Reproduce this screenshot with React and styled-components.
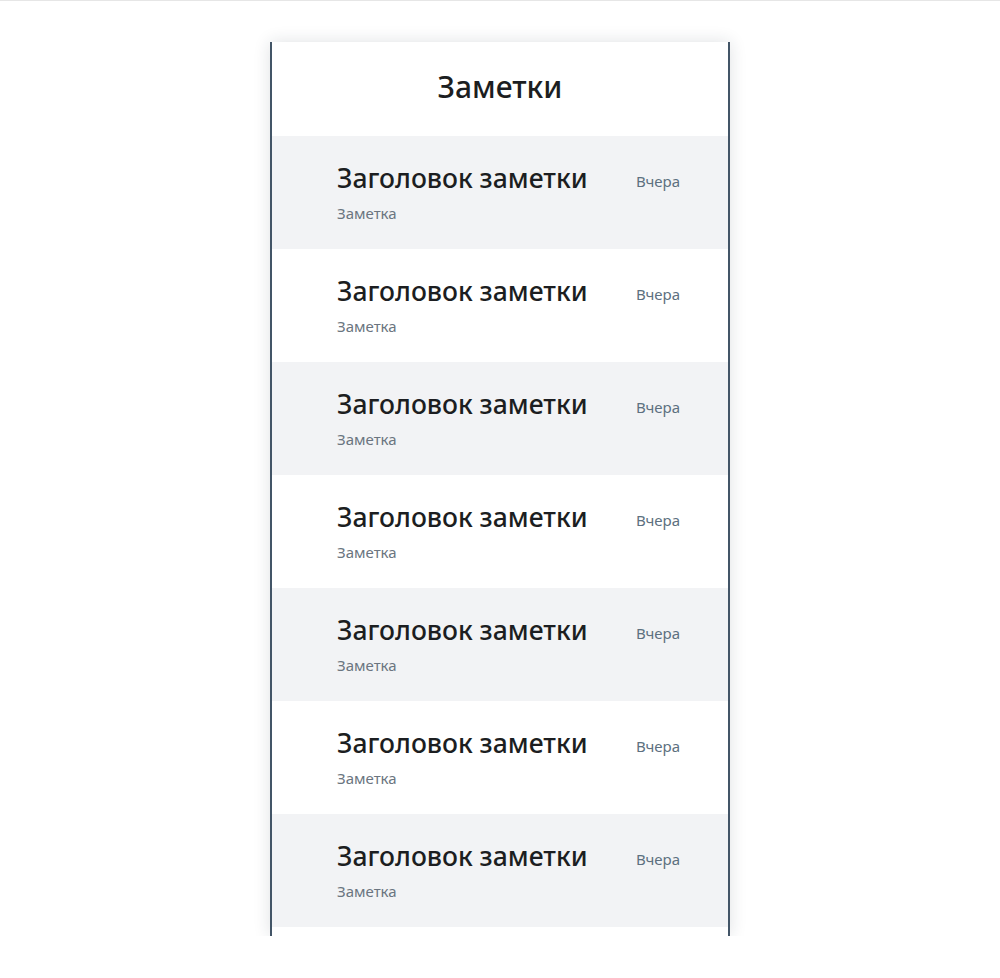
import React from "react";
import styled, { createGlobalStyle } from "styled-components";

const GlobalStyle = createGlobalStyle`
  html, body {
    margin: 0;
    padding: 0;
    background: #ffffff;
    font-family: "Noto Sans", "Open Sans", sans-serif;
  }
`;

const Page = styled.div`
  border-top: 1px solid #e6e6e6;
  padding-top: 41px;
  display: flex;
  justify-content: center;
`;

const Card = styled.div`
  width: 456px;
  height: 894px;
  overflow: hidden;
  background: #ffffff;
  border-left: 2px solid #435567;
  border-right: 2px solid #435567;
  box-shadow: 0 0 16px rgba(30, 45, 60, 0.14);
`;

const Header = styled.h1`
  margin: 0;
  height: 94px;
  box-sizing: border-box;
  padding-bottom: 6px;
  display: flex;
  align-items: center;
  justify-content: center;
  font-size: 30px;
  font-weight: 500;
  color: #1c1e21;
`;

const Row = styled.div`
  height: 113px;
  box-sizing: border-box;
  padding: 24px 48px 0 65px;
  background: ${(p) => (p.$shaded ? "#f2f3f5" : "#ffffff")};
`;

const TopLine = styled.div`
  display: flex;
  align-items: flex-start;
  justify-content: space-between;
`;

const Title = styled.div`
  font-size: 26.5px;
  line-height: 36px;
  font-weight: 500;
  color: #1c1e21;
`;

const Date = styled.div`
  margin-top: 11px;
  font-size: 15px;
  line-height: 20px;
  color: #5d7080;
`;

const Note = styled.div`
  margin-top: 7px;
  font-size: 15px;
  line-height: 20px;
  color: #6b7580;
`;

const notes = Array.from({ length: 7 }, (_, i) => i);

const App = () => {
  return (
    <Page>
      <GlobalStyle />
      <Card>
        <Header>Заметки</Header>
        {notes.map((i) => (
          <Row key={i} $shaded={i % 2 === 0}>
            <TopLine>
              <Title>Заголовок заметки</Title>
              <Date>Вчера</Date>
            </TopLine>
            <Note>Заметка</Note>
          </Row>
        ))}
      </Card>
    </Page>
  );
};

export default App;
